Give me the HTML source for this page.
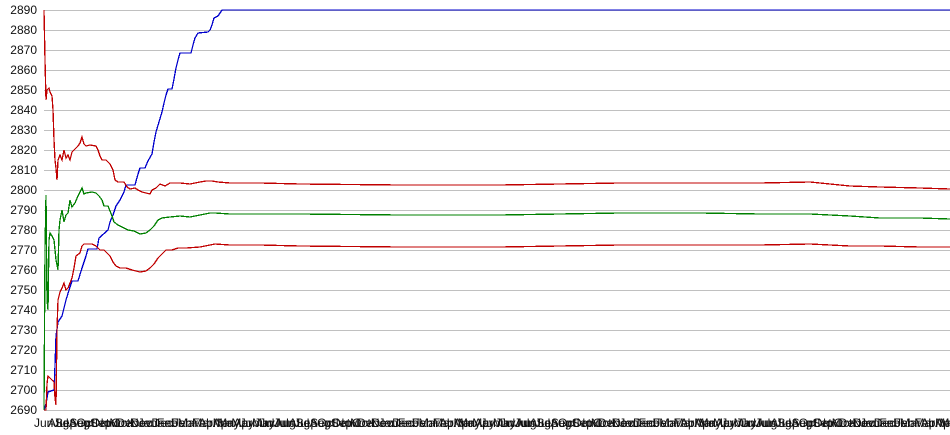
<!DOCTYPE html>
<html><head><meta charset="utf-8"><style>
html,body{margin:0;padding:0;background:#fff;width:950px;height:435px;overflow:hidden}
svg{display:block}
text{font-family:"Liberation Sans",Arial,sans-serif;font-size:12px;fill:#111}
</style></head><body>
<svg width="950" height="435" viewBox="0 0 950 435">
<g stroke="#c0c0c0" stroke-width="1" shape-rendering="crispEdges">
<line x1="44" y1="10.5" x2="950" y2="10.5"/><line x1="44" y1="30.5" x2="950" y2="30.5"/>
<line x1="44" y1="50.5" x2="950" y2="50.5"/><line x1="44" y1="70.5" x2="950" y2="70.5"/>
<line x1="44" y1="90.5" x2="950" y2="90.5"/><line x1="44" y1="110.5" x2="950" y2="110.5"/>
<line x1="44" y1="130.5" x2="950" y2="130.5"/><line x1="44" y1="150.5" x2="950" y2="150.5"/>
<line x1="44" y1="170.5" x2="950" y2="170.5"/><line x1="44" y1="190.5" x2="950" y2="190.5"/>
<line x1="44" y1="210.5" x2="950" y2="210.5"/><line x1="44" y1="230.5" x2="950" y2="230.5"/>
<line x1="44" y1="250.5" x2="950" y2="250.5"/><line x1="44" y1="270.5" x2="950" y2="270.5"/>
<line x1="44" y1="290.5" x2="950" y2="290.5"/><line x1="44" y1="310.5" x2="950" y2="310.5"/>
<line x1="44" y1="330.5" x2="950" y2="330.5"/><line x1="44" y1="350.5" x2="950" y2="350.5"/>
<line x1="44" y1="370.5" x2="950" y2="370.5"/><line x1="44" y1="390.5" x2="950" y2="390.5"/>
<line x1="44" y1="410.5" x2="950" y2="410.5"/>
</g>
<g text-anchor="end">
<text x="37" y="14">2890</text><text x="37" y="34">2880</text><text x="37" y="54">2870</text>
<text x="37" y="74">2860</text><text x="37" y="94">2850</text><text x="37" y="114">2840</text>
<text x="37" y="134">2830</text><text x="37" y="154">2820</text><text x="37" y="174">2810</text>
<text x="37" y="194">2800</text><text x="37" y="214">2790</text><text x="37" y="234">2780</text>
<text x="37" y="254">2770</text><text x="37" y="274">2760</text><text x="37" y="294">2750</text>
<text x="37" y="314">2740</text><text x="37" y="334">2730</text><text x="37" y="354">2720</text>
<text x="37" y="374">2710</text><text x="37" y="394">2700</text><text x="37" y="414">2690</text>
</g>
<g fill="none" stroke-width="1.3" shape-rendering="crispEdges">
<polyline stroke="#0000cc" points="44,410 46,404 48,392 54,390 55,366 56,336 58,322 62,316 66,300 70,287 72,281 78,281 82,268 86,256 88,249 97,249 99,238 108,230 110,222 113,215 116,206 120,200 124,192 126,185 135,185 138,174 140,168 145,168 148,161 152,154 154,142 156,132 159,122 162,112 164,103 166,95 168,89 172,89 174,79 176,68 178,60 180,53 191,53 193,45 195,38 198,33 208,32 210,30 212,25 214,18 218,16 222,10 950,10"/>
<polyline stroke="#c00000" points="44,10 45,60 46,100 47,90 49,88 50,92 52,96 53,110 54,140 55,160 56,168 57,180 58,160 60,155 62,160 64,150 66,158 68,155 70,160 72,152 74,150 76,148 78,146 80,143 82,137 84,144 86,146 90,145 96,146 98,150 100,156 102,160 106,160 110,164 113,170 115,180 118,182 124,182 127,187 130,189 135,188 138,190 142,192 146,193 150,194 152,190 156,188 160,184 165,186 170,183 180,183 190,184 200,182 206,181 212,181 218,182 230,183 260,183 300,184 400,185 500,185 560,184 620,183 700,183 760,183 810,182 830,184 850,186 880,187 920,188 950,189"/>
<polyline stroke="#008000" points="44,410 45,250 46,195 47,300 48,310 49,240 50,233 52,236 54,240 56,260 58,270 59,230 60,220 62,210 64,222 66,215 68,213 70,200 72,207 75,203 78,196 80,192 82,188 84,194 86,193 92,192 96,193 99,196 102,200 104,206 108,206 112,216 114,222 118,225 124,228 128,230 134,231 140,234 146,233 150,230 154,226 158,220 162,218 170,217 180,216 190,217 200,215 210,213 215,213 230,214 260,214 300,214 400,215 500,215 560,214 620,213 700,213 760,214 810,214 830,215 850,216 880,218 920,218 950,219"/>
<polyline stroke="#c00000" points="44,410 46,410 47,384 48,376 50,378 52,380 54,382 55,398 56,405 57,330 58,300 60,292 62,288 64,283 66,290 68,288 70,283 72,278 74,268 76,256 80,253 82,246 84,244 88,244 92,244 96,246 100,250 104,250 110,256 113,262 116,266 120,268 126,268 132,270 136,271 140,272 146,271 150,268 154,264 158,258 162,254 166,250 172,250 178,248 186,248 200,247 210,245 215,244 230,245 260,245 300,246 400,247 500,247 560,246 620,245 700,245 760,245 810,244 830,245 850,246 880,246 920,247 950,247</polyline>"/>
</g>
<g>
<text x="34" y="427">JunJulAugSepOctNovDecJanFebMarAprMayJunJulAugSepOctNovDecJanFebMarAprMayJunJulAugSepOctNovDecJanFebMarAprMayJunJulAugSepOctNovDecJanFebMarAprMayJunJulAugSepOctNovDecJanFebMarAprMay</text>
<text x="48" y="427">AugSepOctNovDecJanFebMarAprMayJunJulAugSepOctNovDecJanFebMarAprMayJunJulAugSepOctNovDecJanFebMarAprMayJunJulAugSepOctNovDecJanFebMarAprMayJunJulAugSepOctNovDecJanFebMarAprMayJunJul</text>
<text x="55" y="427">SepOctNovDecJanFebMarAprMayJunJulAugSepOctNovDecJanFebMarAprMayJunJulAugSepOctNovDecJanFebMarAprMayJunJulAugSepOctNovDecJanFebMarAprMayJunJulAugSepOctNovDecJanFebMarAprMayJunJulAug</text>
</g>
</svg>
</body></html>
